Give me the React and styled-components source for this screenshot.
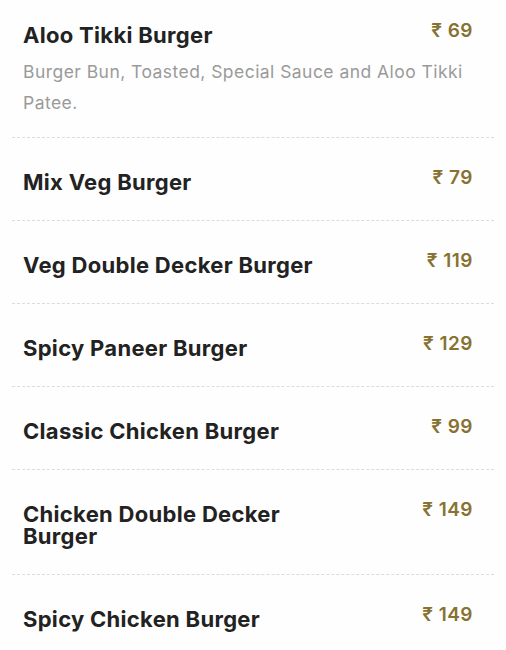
import React from "react";
import styled, { createGlobalStyle } from "styled-components";

const GlobalStyle = createGlobalStyle`
  body {
    margin: 0;
    background: #ffffff;
    font-family: "Inter", "Noto Sans", sans-serif;
  }
`;

const Menu = styled.div`
  width: 506px;
  height: 650px;
  overflow: hidden;
  padding: 0 12px;
  box-sizing: border-box;
  background: #fefefe;
`;

const Item = styled.div`
  display: flex;
  flex-direction: column;
  gap: 10px;
  padding: ${(p) => (p.first ? "24px 21px 19px 11px" : "33px 21px 27px 11px")};
  border-bottom: 1px dashed #dcdcdc;
`;

const Head = styled.div`
  display: flex;
  justify-content: space-between;
  align-items: flex-start;
`;

const Title = styled.h3`
  margin: 0;
  max-width: 300px;
  font-size: 22px;
  line-height: 22px;
  font-weight: 700;
  color: #222222;
  letter-spacing: 0.3px;
`;

const Desc = styled.p`
  margin: 0 -12px 0 0;
  font-size: 17.5px;
  line-height: 31px;
  color: #9a9a9a;
  letter-spacing: 0.45px;
`;

const Price = styled.span`
  flex-shrink: 0;
  margin-top: -5px;
  font-size: 19px;
  line-height: 23px;
  font-weight: 600;
  color: #877232;
  letter-spacing: 0.5px;
`;

const items = [
  {
    name: "Aloo Tikki Burger",
    price: 69,
    desc: "Burger Bun, Toasted, Special Sauce and Aloo Tikki Patee.",
  },
  { name: "Mix Veg Burger", price: 79 },
  { name: "Veg Double Decker Burger", price: 119 },
  { name: "Spicy Paneer Burger", price: 129 },
  { name: "Classic Chicken Burger", price: 99 },
  { name: "Chicken Double Decker Burger", price: 149 },
  { name: "Spicy Chicken Burger", price: 149 },
];

export default function App() {
  return (
    <>
      <GlobalStyle />
      <Menu>
        {items.map((item, id) => (
          <Item key={id} first={id === 0}>
            <Head>
              <Title>{item.name}</Title>
              <Price>₹ {item.price}</Price>
            </Head>
            {item.desc && <Desc>{item.desc}</Desc>}
          </Item>
        ))}
      </Menu>
    </>
  );
}
